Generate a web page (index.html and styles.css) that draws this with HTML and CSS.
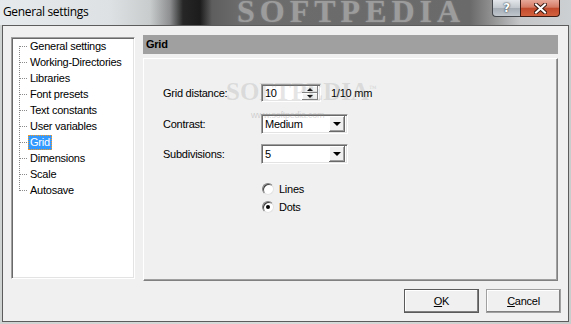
FILE: index.html
```html
<!DOCTYPE html>
<html lang="en">

<head>
    <meta charset="UTF-8">
    <title>General settings</title>
    <link rel="stylesheet" href="styles.css">
</head>

<body>
    <div class="window">

        <!-- title bar -->
        <div class="titlebar">
            <span class="title">General settings</span>
            <span class="title-mark">SOFTPEDIA</span>
            <div class="caption">
                <span class="cap-btn cap-help">?</span>
                <span class="cap-btn cap-close">
                    <svg width="13" height="11" viewBox="0 0 13 11">
                        <path d="M2 1.5 L11 9.5 M11 1.5 L2 9.5" stroke="#3a1a12" stroke-width="4" stroke-linecap="square"/>
                        <path d="M2 1.5 L11 9.5 M11 1.5 L2 9.5" stroke="#ffffff" stroke-width="2" stroke-linecap="square"/>
                    </svg>
                </span>
            </div>
        </div>

        <div class="client">
            <div class="main">

                <!-- left tree -->
                <ul class="tree">
                    <li><span>General settings</span></li>
                    <li><span>Working-Directories</span></li>
                    <li><span>Libraries</span></li>
                    <li><span>Font presets</span></li>
                    <li><span>Text constants</span></li>
                    <li><span>User variables</span></li>
                    <li class="selected"><span>Grid</span></li>
                    <li><span>Dimensions</span></li>
                    <li><span>Scale</span></li>
                    <li><span>Autosave</span></li>
                </ul>

                <!-- settings page -->
                <div class="page">
                    <div class="page-head">Grid</div>
                    <div class="group">
                        <div class="row row-spin">
                            <span class="label">Grid distance:</span>
                            <div class="spin">
                                <span class="field">10</span>
                                <div class="spin-btns">
                                    <span class="spin-btn"><i class="tri-up"></i></span>
                                    <span class="spin-btn"><i class="tri-down"></i></span>
                                </div>
                            </div>
                            <span class="unit">1/10 mm</span>
                        </div>
                        <div class="row row-combo">
                            <span class="label">Contrast:</span>
                            <div class="combo">
                                <span class="field">Medium</span>
                                <span class="drop"><i class="tri-down big"></i></span>
                            </div>
                        </div>
                        <div class="row row-combo">
                            <span class="label">Subdivisions:</span>
                            <div class="combo">
                                <span class="field">5</span>
                                <span class="drop"><i class="tri-down big"></i></span>
                            </div>
                        </div>

                        <div class="radios">
                            <div class="radio"><span class="circle"></span>Lines</div>
                            <div class="radio"><span class="circle checked"></span>Dots</div>
                        </div>

                        <div class="watermark">SOFTPEDIA<sup>™</sup></div>
                        <div class="watermark-url">www.softpedia.com</div>
                    </div>
                </div>
            </div>

            <!-- dialog buttons -->
            <div class="buttons">
                <button class="btn btn-default"><u>O</u>K</button>
                <button class="btn"><u>C</u>ancel</button>
            </div>
        </div>
    </div>
</body>

</html>
```

FILE: styles.css
```css
body {
    margin: 0;
    font-family: "Liberation Sans", Arial, sans-serif;
    font-size: 11px;
    letter-spacing: -0.25px;
    color: #000;
}

.window {
    width: 571px;
    height: 324px;
    overflow: hidden;
    background: linear-gradient(90deg, #cfd3d2 0, #d8dcda 300px, #c9cdcb 571px);
}

/* title bar */
.titlebar {
    position: relative;
    height: 25px;
    display: flex;
    align-items: flex-start;
    background: linear-gradient(90deg, #e6eaec 0, #dde1e3 110px, #c9cccd 150px, #8d8f90 170px, #262626 183px, #1c1c1c 200px, #5e5e5e 212px, #6c6c6c 240px, #6a6a6a 470px, #8e8e8e 490px, #c4c6c8 520px, #cdd0d2 571px);
    overflow: hidden;
}

.title {
    font-family: "Open Sans", "Noto Sans", sans-serif;
    font-size: 12px;
    letter-spacing: -0.35px;
    line-height: 16px;
    padding: 4px 0 0 3px;
}

.title-mark {
    position: absolute;
    left: 237px;
    top: -7px;
    font-family: "Liberation Serif", serif;
    font-weight: bold;
    font-size: 32px;
    letter-spacing: 5px;
    color: #9c9c9c;
    text-shadow: 0 0 2px #8a8a8a;
}

.caption {
    margin-left: auto;
    margin-right: 11px;
    display: flex;
    position: relative;
}

.cap-btn {
    height: 16px;
    display: flex;
    align-items: center;
    justify-content: center;
    border: 1px solid #44484c;
    border-top: none;
}

.cap-help {
    width: 27px;
    border-right: none;
    border-radius: 0 0 0 4px;
    background: linear-gradient(#e3e7eb, #c2c8ce 48%, #a6adb5 52%, #c0c6cc);
    color: #fff;
    font-family: "DejaVu Sans", sans-serif;
    font-weight: bold;
    font-size: 12px;
    text-shadow: 0 0 2px #39414a, 0 0 1px #39414a;
}

.cap-close {
    width: 38px;
    border-color: #3e1a12;
    border-radius: 0 0 4px 0;
    background: linear-gradient(#e8a898, #d47a64 45%, #c24a2c 52%, #d2613f);
}

/* client area */
.client {
    margin-left: 2px;
    width: 565px;
    height: 295px;
    border: 1px solid #5c5c5c;
    background: #f0f0f0;
}

.main {
    display: flex;
    align-items: flex-start;
    padding-top: 9px;
}

/* tree */
.tree {
    list-style: none;
    margin: 2px 0 0 8px;
    padding: 0;
    width: 122px;
    height: 240px;
    background: #fff;
    border: 1px solid;
    border-color: #a0a0a0 #fff #fff #a0a0a0;
    box-shadow: inset 1px 1px #696969, inset -1px -1px #e3e3e3;
}

.tree li {
    position: relative;
    height: 16px;
    padding-left: 16px;
    white-space: nowrap;
}

.tree li:first-child {
    margin-top: 1px;
}

.tree li::before {
    content: "";
    position: absolute;
    left: 7px;
    top: -9px;
    width: 7px;
    height: 16px;
    border-left: 1px dotted #8a8a8a;
    border-bottom: 1px dotted #8a8a8a;
}

.tree li:first-child::before {
    top: 6px;
    height: 1px;
    border-left: none;
    left: 8px;
}

.tree li span {
    display: inline-block;
    height: 13px;
    line-height: 13px;
    padding: 0 1px;
    border: 1px solid transparent;
}

.tree li.selected span {
    background: #3399ff;
    color: #fff;
    border: 1px dotted #ff9a1a;
}

/* page */
.page {
    margin-left: 8px;
    width: 415px;
}

.page-head {
    height: 19px;
    line-height: 19px;
    padding-left: 3px;
    background: #a0a0a0;
    font-weight: bold;
}

.group {
    position: relative;
    margin-top: 4px;
    padding: 25px 0 0 19px;
    box-sizing: border-box;
    height: 223px;
    border: 1px solid;
    border-color: #fff #808080 #808080 #fff;
    box-shadow: inset -1px -1px #a0a0a0;
}

.row {
    display: flex;
    align-items: center;
}

.row-spin {
    height: 18px;
    margin-bottom: 12px;
}

.row-combo {
    height: 20px;
    margin-bottom: 10px;
}

.label {
    width: 98px;
}

.spin,
.combo {
    display: flex;
    align-items: center;
    box-sizing: border-box;
    background: #fff;
    border: 1px solid;
    border-color: #a0a0a0 #fff #fff #a0a0a0;
    box-shadow: inset 1px 1px #696969, inset -1px -1px #e3e3e3;
    padding: 2px;
}

.spin {
    width: 60px;
    height: 18px;
}

.combo {
    width: 87px;
    height: 20px;
}

.field {
    flex: 1;
    padding-left: 1px;
}

.spin-btns {
    display: flex;
    flex-direction: column;
    width: 16px;
    height: 14px;
}

.spin-btn {
    flex: 1;
    display: flex;
    align-items: center;
    justify-content: center;
    background: #f0f0f0;
    box-shadow: inset -1px -1px #808080, inset 1px 1px #fff;
}

.drop {
    width: 16px;
    height: 16px;
    display: flex;
    align-items: center;
    justify-content: center;
    background: #f0f0f0;
    box-shadow: inset -1px -1px #696969, inset 1px 1px #fff, inset -2px -2px #a0a0a0;
}

.tri-up,
.tri-down {
    width: 0;
    height: 0;
    border-left: 3px solid transparent;
    border-right: 3px solid transparent;
}

.tri-up {
    border-bottom: 3px solid #000;
}

.tri-down {
    border-top: 3px solid #000;
}

.tri-down.big {
    border-left-width: 4px;
    border-right-width: 4px;
    border-top-width: 4px;
}

.unit {
    margin-left: 10px;
}

/* radios */
.radios {
    margin-top: 16px;
    padding-left: 99px;
}

.radio {
    height: 18px;
    display: flex;
    align-items: center;
}

.circle {
    width: 10px;
    height: 10px;
    margin-right: 5px;
    border-radius: 50%;
    background: #fff;
    border: 1px solid;
    border-color: #808080 #e3e3e3 #e3e3e3 #808080;
    box-shadow: inset 1px 1px #404040;
    display: flex;
    align-items: center;
    justify-content: center;
}

.circle.checked::after {
    content: "";
    width: 4px;
    height: 4px;
    border-radius: 50%;
    background: #000;
}

/* softpedia watermark */
.watermark {
    position: absolute;
    left: 82px;
    top: 19px;
    font-family: "Liberation Serif", serif;
    font-weight: bold;
    font-size: 25px;
    letter-spacing: 0;
    color: rgba(140, 140, 140, 0.22);
    pointer-events: none;
}

.watermark sup {
    font-size: 8px;
}

.watermark-url {
    position: absolute;
    left: 107px;
    top: 51px;
    font-size: 9px;
    color: rgba(140, 140, 140, 0.35);
    pointer-events: none;
}

/* bottom buttons */
.buttons {
    display: flex;
    justify-content: flex-end;
    gap: 7px;
    margin-top: 8px;
    padding-right: 7px;
}

.btn {
    width: 75px;
    height: 24px;
    padding: 0;
    font-family: inherit;
    font-size: 11px;
    letter-spacing: -0.25px;
    color: #000;
    background: #f0f0f0;
    border: 1px solid #a0a0a0;
    box-shadow: inset -1px -1px #808080, inset 1px 1px #fff;
}

.btn-default {
    border-color: #5a5a5a;
}
```
